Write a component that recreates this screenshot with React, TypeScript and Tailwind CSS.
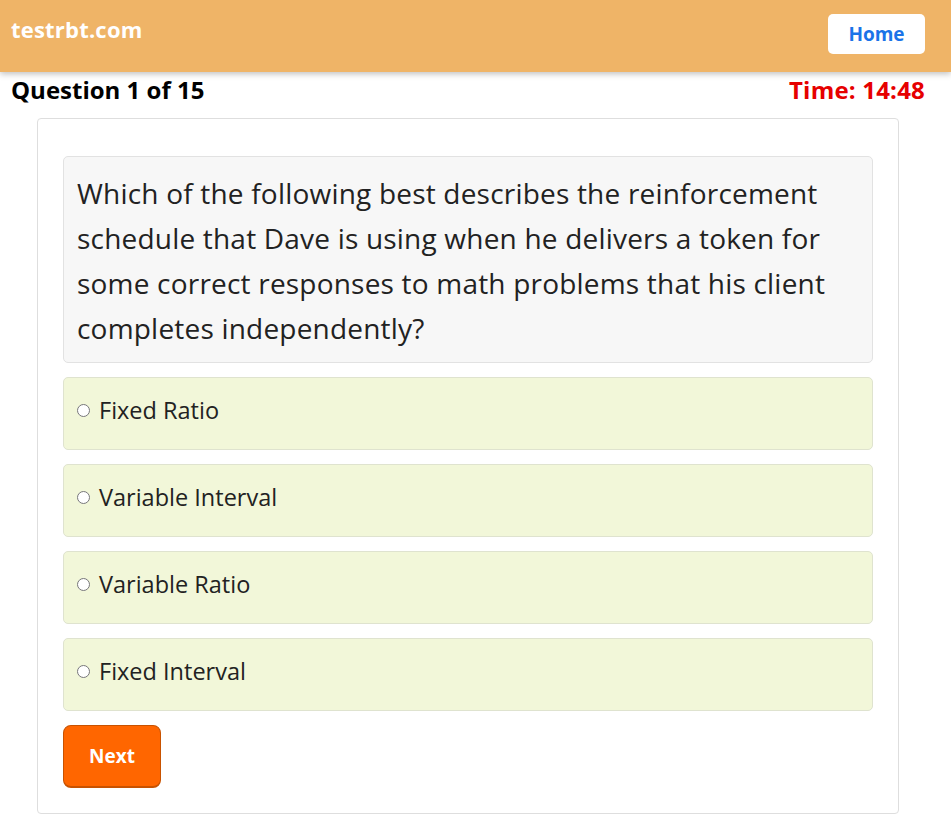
import { useState } from "react";

const options = ["Fixed Ratio", "Variable Interval", "Variable Ratio", "Fixed Interval"];

const App = () => {
  const [picked, setPicked] = useState<string | null>(null);

  return (
    <div className="min-h-screen bg-white font-['Open_Sans','Noto_Sans',sans-serif] text-[#212529]">
      <header className="flex h-[72px] items-start justify-between bg-[#efb467] px-[11px] pt-[13px] shadow-[0_2px_6px_rgba(0,0,0,0.25)] relative">
        <div className="mt-[1px] text-[22px] font-bold leading-[30px] tracking-[0.2px] text-white">testrbt.com</div>
        <button className="mr-[15px] mt-[1px] h-[40px] w-[97px] rounded-[5px] bg-white text-[19px] font-bold text-[#1a73e8]">
          Home
        </button>
      </header>

      <div className="flex items-center justify-between px-[11px] pt-[2px]">
        <div className="text-[24px] font-bold leading-[32px] tracking-[0px] text-black">Question 1 of 15</div>
        <div className="mr-[15px] text-[24px] font-bold leading-[32px] tracking-[0.2px] text-[#e60000]">Time: 14:48</div>
      </div>

      <div className="mx-[37px] mt-[12px] w-[862px] rounded-[4px] border border-[#dedede] px-[25px] pb-[25px] pt-[37px]">
        <div className="rounded-[5px] border border-[#e2e2e2] bg-[#f7f7f7] px-[13px] pb-[11px] pt-[14px] text-[28px] leading-[45px] tracking-[0.2px] text-[#222]">
          Which of the following best describes the reinforcement schedule that Dave is using when he delivers a
          token for some correct responses to math problems that his client completes independently?
        </div>

        <div className="mt-[14px] flex flex-col gap-[14px]">
          {options.map((o) => (
            <label
              key={o}
              className="flex h-[73px] cursor-pointer items-start rounded-[5px] border border-[#dfe3cf] bg-[#f2f7d9] px-[13px] pt-[16px] text-[23.5px] leading-[32px] text-[#222]"
            >
              <input
                type="radio"
                name="answer"
                checked={picked === o}
                onChange={() => setPicked(o)}
                className="mr-[9px] mt-[10px] h-[13px] w-[13px]"
              />
              {o}
            </label>
          ))}
        </div>

        <button className="mt-[14px] h-[63px] w-[98px] rounded-[8px] border border-[#c85200] border-b-2 bg-[#ff6600] text-[19px] font-bold text-white">
          Next
        </button>
      </div>
    </div>
  );
};

export default App;
